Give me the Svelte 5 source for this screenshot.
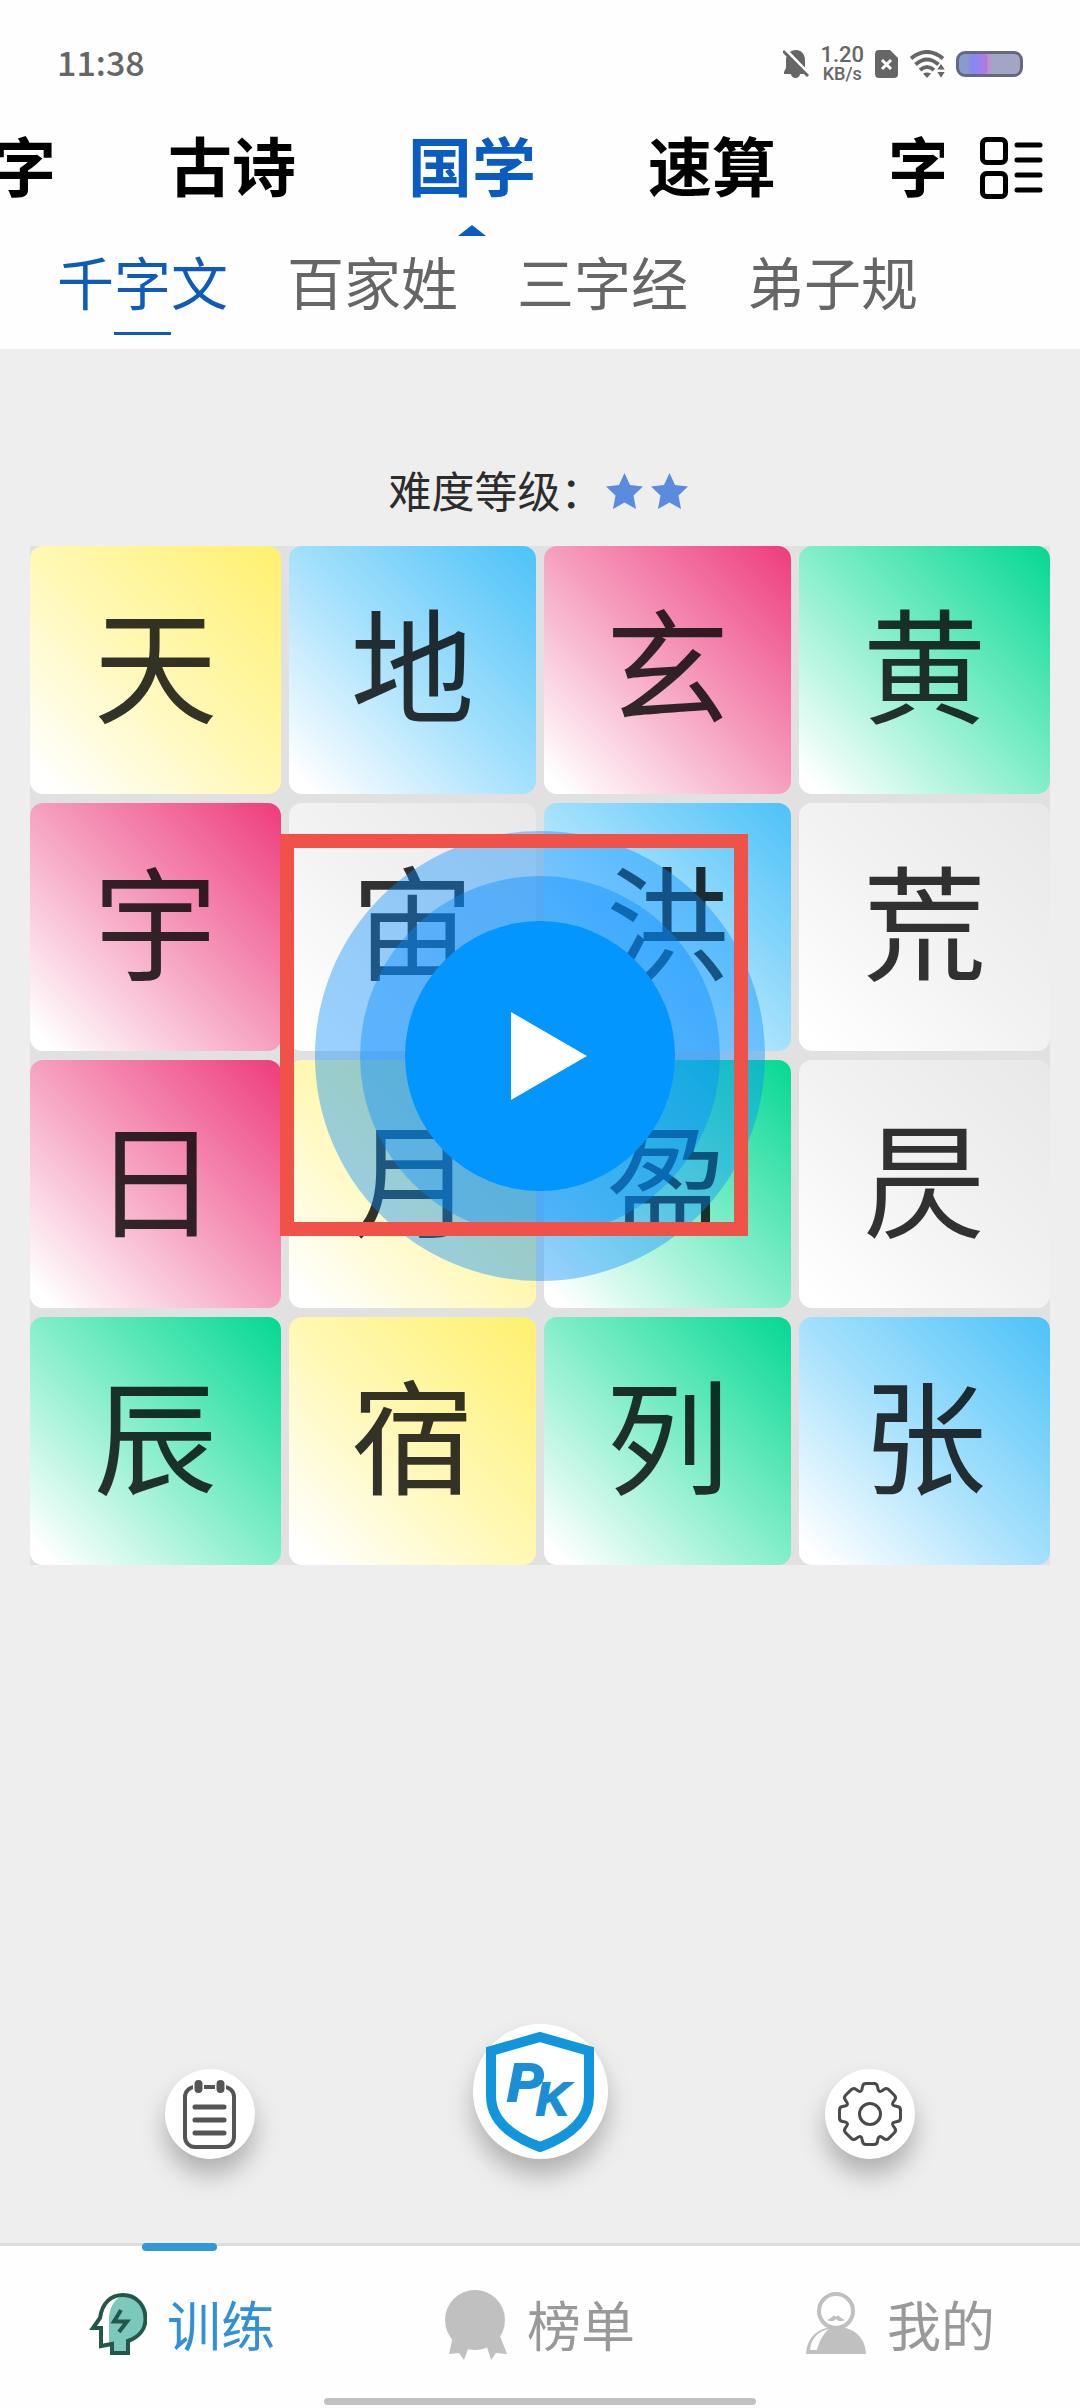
<script>
  const categories = [
    { label: '字', edge: 'start' },
    { label: '古诗' },
    { label: '国学', active: true },
    { label: '速算' },
    { label: '字', edge: 'end' },
  ];
  const books = ['千字文', '百家姓', '三字经', '弟子规'];
  const tiles = [
    ['天', 'yellow'], ['地', 'blue'], ['玄', 'pink'], ['黄', 'green'],
    ['宇', 'pink'], ['宙', 'plain'], ['洪', 'blue'], ['荒', 'plain'],
    ['日', 'pink'], ['月', 'yellow'], ['盈', 'green'], ['昃', 'plain'],
    ['辰', 'green'], ['宿', 'yellow'], ['列', 'green'], ['张', 'blue'],
  ];
  let book = $state('千字文');

  // One gear tooth, rotated eight times round the centre.
  function gearPath() {
    const turn = (x, y, a) =>
      `${(x * Math.cos(a) - y * Math.sin(a)).toFixed(2)} ${(x * Math.sin(a) + y * Math.cos(a)).toFixed(2)}`;
    let d = '';
    for (let i = 0; i < 8; i++) {
      const a = (i * Math.PI) / 4;
      const p = (x, y) => turn(x, y, a);
      d += `${i ? 'L' : 'M'}${p(-8, -25)}L${p(-7.5, -27.5)}Q${p(-7, -30.5)} ${p(-4, -30.5)}`;
      d += `L${p(4, -30.5)}Q${p(7, -30.5)} ${p(7.5, -27.5)}L${p(8, -25)}Q${p(8.6, -21.5)} ${p(11.5, -23)}`;
    }
    return d + 'Z';
  }
</script>

<div class="page">
  <header>
    <div class="status">
      <span class="time">11:38</span>
      <div class="indicators">
        <svg width="26" height="30" viewBox="0 0 26 30" aria-hidden="true">
          <path d="M13 1C18 1 22 5 22 11V19L24 23V25H17C17 27 15 29 12.500 29S8 27 8 25H1V23L3 19V11C3 5 8 1 13 1Z" fill="#666" />
          <path d="M3 1L28 27" stroke="#fff" stroke-width="3" />
          <path d="M0 2L25 27" stroke="#666" stroke-width="3" />
        </svg>
        <span class="speed"><b>1.20</b><span>KB/s</span></span>
        <svg width="24" height="28" viewBox="0 0 24 28" aria-hidden="true">
          <path d="M4 0H15L23 8V24Q23 28 19 28H4Q0 28 0 24V4Q0 0 4 0Z" fill="#666" />
          <path d="M7 10L16 19M16 10L7 19" stroke="#fff" stroke-width="3" />
        </svg>
        <svg width="35" height="28" viewBox="0 0 35 28" aria-hidden="true">
          <g fill="none" stroke="#666" stroke-width="4">
            <path d="M1 8.500Q17 -4.500 33 8.500" />
            <path d="M5.500 14.500Q17 4.500 28.500 14.500" />
            <path d="M10 20Q17 14 24 20" />
          </g>
          <path d="M13 23.500Q17 21.500 21 23.500L17 28Z" fill="#666" />
          <path d="M31 13L35.500 20H26.500ZM31 28.500L26.500 21.500H35.500Z" fill="#666" stroke="#fff" />
        </svg>
        <span class="battery"></span>
      </div>
    </div>

    <div class="category-bar">
      <nav class="categories" aria-label="分类">
        {#each categories as c}
          <button class={['category', c.edge, c.active && 'active']}>{c.label}</button>
        {/each}
      </nav>
      <button class="all" aria-label="全部分类">
        <svg width="64" height="62" viewBox="0 0 64 62" fill="none" stroke="#000" stroke-width="5" stroke-linecap="round">
          <rect x="2.500" y="2.500" width="23" height="23" rx="4" />
          <rect x="2.500" y="36.500" width="23" height="23" rx="4" />
          <path d="M37 8H60M37 23H60M37 38H60M37 53H60" />
        </svg>
      </button>
    </div>

    <nav class="books" aria-label="书目">
      {#each books as name}
        <button class:active={name === book} onclick={() => (book = name)}>{name}</button>
      {/each}
    </nav>
  </header>

  <main>
    <p class="level">
      <span class="caption">难度等级：</span>
      <span class="stars">
        {#each [1, 2] as n (n)}
          <svg width="37" height="38" viewBox="0 0 37 36" aria-hidden="true">
            <path d="M18.500 0L24 12L37 13.500L27.500 22.500L30 36L18.500 29.500L7 36L9.500 22.500L0 13.500L13 12Z" fill="#5b8bdf" />
          </svg>
        {/each}
      </span>
    </p>

    <div class="board">
      {#each tiles as [char, tone]}
        <div class="tile {tone}">{char}</div>
      {/each}
      <button class="play" aria-label="开始">
        <span class="ring"><span class="disc">
          <svg width="76" height="88" viewBox="0 0 76 88"><path d="M0 0L76 44L0 88Z" fill="#fff" /></svg>
        </span></span>
      </button>
      <div class="marker"></div>
    </div>

    <div class="actions">
      <button class="round" aria-label="记录">
        <svg width="54" height="70" viewBox="0 0 54 70" fill="none" stroke="#555" stroke-linecap="round">
          <rect x="2" y="8" width="49" height="60" rx="10" stroke-width="4" />
          <path d="M10 8H21M32 8H43" stroke="#fff" stroke-width="6" stroke-linecap="butt" />
          <path d="M15.500 5V10M37.500 5V10" stroke-width="8" />
          <path d="M12 28H41M12 41H41M12 54H41" stroke-width="5" />
        </svg>
      </button>
      <button class="round large" aria-label="PK">
        <svg width="110" height="120" viewBox="0 0 110 120">
          <path d="M55 5L104 19V64C104 88 85 104 55 115C25 104 6 88 6 64V19Z" fill="#fff" stroke="#1296db" stroke-width="10" />
          <text x="22" y="69" class="letter-p">P</text>
          <text x="51" y="83" class="letter-k">K</text>
        </svg>
      </button>
      <button class="round" aria-label="设置">
        <svg width="66" height="66" viewBox="-33 -33 66 66" fill="none" stroke="#4a4a4a" stroke-width="3" stroke-linejoin="round">
          <path d={gearPath()} />
          <circle r="10.500" />
        </svg>
      </button>
    </div>
  </main>

  <footer>
    <nav class="tabs" aria-label="主导航">
      <a href="#train" class="tab current">
        <svg width="62" height="70" viewBox="-5 -3 62 70" aria-hidden="true">
          <path d="M3 35L10 25C12 10 21 2 33 2C46 2 55.500 12 55.500 26C55.500 36 49 44 38 48V60H22V51L11 53V35Z" fill="#7cc9bc" />
          <path d="M3 35L10 25C12 10 21 2 31 3C23 8 19 16 19 26V51L11 53V35Z" fill="#fff" />
          <path d="M3 35L10 25C12 10 21 2 33 2C46 2 55.500 12 55.500 26C55.500 36 49 44 38 48V60H22V51L11 53V35Z" fill="none" stroke="#23574c" stroke-width="4" />
          <path d="M31 17L24 28.500H37L29 39" fill="none" stroke="#23574c" stroke-width="4" />
        </svg>
        <span>训练</span>
      </a>
      <a href="#rank" class="tab">
        <svg width="62" height="70" viewBox="0 0 62 70" aria-hidden="true">
          <circle cx="30" cy="30" r="30" fill="#c0c0c0" />
          <path d="M8 46L4 64L14 63L19 70L23 59L42 57L46 70L51 63L62 64L55 46Z" fill="#c0c0c0" />
        </svg>
        <span>榜单</span>
      </a>
      <a href="#me" class="tab">
        <svg width="62" height="70" viewBox="0 -3 62 70" aria-hidden="true">
          <path d="M1 61C2 44 13 34 31 34S60 44 61 61Z" fill="#c0c0c0" />
          <path d="M5 57C6 46 13 38 24 36C17 42 14 49 12 57Z" fill="#fff" />
          <circle cx="31" cy="18" r="17" fill="#fff" stroke="#c0c0c0" stroke-width="4" />
          <path d="M22 27Q25 26 27 24Q29 21 31 24Q33 21 35 24Q37 26 40 27Q34 30 31 26Q28 30 22 27Z" fill="#c0c0c0" />
        </svg>
        <span>我的</span>
      </a>
    </nav>
    <div class="home"></div>
  </footer>
</div>

<style>
  :global(body) {
    margin: 0;
    background: #eee;
  }
  .page {
    min-height: 100vh;
    display: flex;
    flex-direction: column;
    background: #eee;
    font-family: 'Noto Sans CJK SC', sans-serif;
  }
  button {
    border: 0;
    padding: 0;
    margin: 0;
    background: none;
    font: inherit;
    color: inherit;
    cursor: pointer;
  }
  svg {
    display: block;
    flex: none;
  }
  header {
    background: #fefefe;
  }

  .status {
    display: flex;
    justify-content: space-between;
    align-items: center;
    box-sizing: border-box;
    height: 115px;
    padding: 13px 57px 0;
    color: #666;
  }
  .time {
    padding-bottom: 5px;
    font-size: 34px;
    font-weight: 500;
  }
  .indicators {
    display: flex;
    align-items: center;
    gap: 11px;
  }
  .speed {
    display: flex;
    flex-direction: column;
    align-items: center;
    font-family: Roboto, sans-serif;
    font-size: 18px;
    font-weight: 500;
    line-height: 18px;
  }
  .speed b {
    font-size: 22px;
    font-weight: 500;
    line-height: 20px;
  }
  .battery {
    width: 61px;
    height: 20px;
    border: 3px solid #66687f;
    border-radius: 9px;
    background: linear-gradient(90deg, #8a9ad0 0 14%, #8c86f0 20% 32%, #a87de0 36% 44%, #c48ccc 48%, #a2a5c6 54%);
  }

  .category-bar {
    display: flex;
    align-items: stretch;
    height: 121px;
    padding-right: 36px;
  }
  .categories {
    flex: 1;
    min-width: 0;
    display: flex;
    justify-content: center;
    overflow: hidden;
  }
  .category {
    position: relative;
    flex: none;
    box-sizing: border-box;
    width: 240px;
    padding-bottom: 25px;
    font-size: 64px;
    font-weight: 700;
    line-height: 96px;
    color: #000;
  }
  .category.start {
    padding-left: 64px;
  }
  .category.end {
    padding-right: 64px;
  }
  .category.active {
    color: #0a5cc0;
  }
  .category.active::after {
    content: '';
    position: absolute;
    left: 50%;
    bottom: 0;
    margin-left: -14px;
    border: 14px solid transparent;
    border-top: 0;
    border-bottom: 11px solid #0a5cc0;
  }
  .all {
    display: flex;
    align-items: center;
    padding-left: 36px;
    padding-bottom: 15px;
  }

  .books {
    display: flex;
    gap: 59px;
    padding: 0 57px;
    height: 113px;
  }
  .books button {
    position: relative;
    padding-bottom: 25px;
    font-size: 57px;
    line-height: 80px;
    color: #666;
  }
  .books button.active {
    color: #0f5cb8;
  }
  .books button.active::after {
    content: '';
    position: absolute;
    left: 57px;
    right: 57px;
    bottom: 14px;
    height: 3px;
    background: #0f5cb8;
  }

  main {
    flex: 1;
    display: flex;
    flex-direction: column;
  }
  .level {
    display: flex;
    justify-content: center;
    align-items: center;
    gap: 2px;
    margin: 111px 0 24px;
    padding-right: 4px;
    font-size: 43px;
    line-height: 58px;
    color: #2c2c2c;
  }
  .caption {
    padding-bottom: 4px;
  }
  .stars {
    display: flex;
    gap: 8px;
  }

  .board {
    position: relative;
    display: grid;
    grid-template-columns: 251fr 247fr 247fr 251fr;
    grid-auto-rows: 248px;
    gap: 9px 8px;
    margin: 0 30px;
    background: #e1e1e1;
  }
  .tile {
    display: flex;
    align-items: center;
    justify-content: center;
    box-sizing: border-box;
    padding-bottom: 20px;
    border-radius: 13px;
    font-size: 124px;
    line-height: 1;
    color: rgba(0, 0, 0, 0.8);
  }
  .yellow {
    background: linear-gradient(45deg, #fff 5%, #fff8b4 50%, #fff06e);
  }
  .blue {
    background: linear-gradient(45deg, #fff 5%, #a4e0fc 50%, #4cc2f8);
  }
  .pink {
    background: linear-gradient(45deg, #fff 5%, #f6a0c0 50%, #ee3c7c);
  }
  .green {
    background: linear-gradient(45deg, #fff 5%, #84eecb 50%, #04d892);
  }
  .plain {
    background: linear-gradient(45deg, #fff 5%, #f2f2f2 50%, #e8e8e8);
  }

  .play {
    position: absolute;
    inset: 0;
    margin: auto;
    width: 450px;
    height: 450px;
  }
  .play,
  .ring,
  .disc {
    display: flex;
    align-items: center;
    justify-content: center;
    border-radius: 50%;
    background: rgba(3, 140, 255, 0.4);
  }
  .ring {
    width: 360px;
    height: 360px;
  }
  .disc {
    width: 270px;
    height: 270px;
    background: #0396ff;
  }
  .disc svg {
    margin-left: 18px;
  }
  .marker {
    position: absolute;
    left: 250px;
    top: 288px;
    width: 440px;
    height: 374px;
    border: 14px solid #f0524a;
    pointer-events: none;
  }

  .actions {
    display: flex;
    justify-content: space-between;
    align-items: flex-end;
    margin-top: auto;
    padding: 60px 165px 84px;
  }
  .round {
    display: flex;
    align-items: center;
    justify-content: center;
    width: 90px;
    height: 90px;
    border-radius: 50%;
    background: #fff;
    box-shadow: 0 16px 24px rgba(0, 0, 0, 0.26);
  }
  .large {
    width: 135px;
    height: 135px;
  }
  .letter-p,
  .letter-k {
    font-family: 'Liberation Sans', sans-serif;
    font-weight: 700;
    font-style: italic;
    fill: #1a8fd6;
    stroke: #1a8fd6;
    stroke-width: 2px;
  }
  .letter-p {
    font-size: 54px;
  }
  .letter-k {
    font-size: 46px;
  }

  footer {
    border-top: 3px solid #ddd;
    background: #fefefe;
  }
  .tabs {
    display: flex;
    height: 152px;
  }
  .tab {
    position: relative;
    flex: 1;
    display: flex;
    justify-content: center;
    align-items: center;
    gap: 20px;
    height: 158px;
    font-size: 54px;
    color: #999;
    text-decoration: none;
  }
  .tab span {
    padding-bottom: 4px;
  }
  .tab.current {
    color: #3291d6;
  }
  .tab.current::before {
    content: '';
    position: absolute;
    top: -3px;
    left: 50%;
    width: 75px;
    height: 8px;
    margin-left: -38px;
    border-radius: 4px;
    background: #3196da;
  }
  .home {
    width: 40%;
    height: 7px;
    margin: 0 auto 3px;
    border-radius: 4px;
    background: #c2c2c2;
  }
</style>
